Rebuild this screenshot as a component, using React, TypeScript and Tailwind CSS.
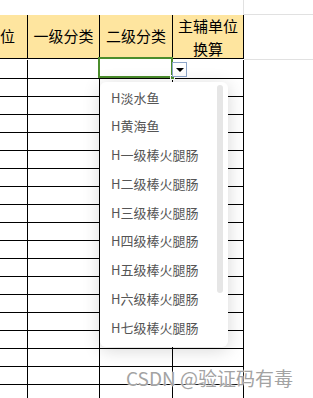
import React from 'react';

const items = [
  'H淡水鱼',
  'H黄海鱼',
  'H一级棒火腿肠',
  'H二级棒火腿肠',
  'H三级棒火腿肠',
  'H四级棒火腿肠',
  'H五级棒火腿肠',
  'H六级棒火腿肠',
  'H七级棒火腿肠',
];

const bodyRows = Array.from({ length: 19 }, (_, i) => i);

function Row({ first }: { first?: boolean }) {
  return (
    <div className="flex">
      <div className={`flex w-[244px] border-b border-black ${first ? 'h-[19px]' : 'h-[18px]'}`}>
        <div className="w-[28px] border-r border-black" />
        <div className="w-[72px] border-r border-black" />
        <div className="w-[73px] border-r border-black" />
        <div className="w-[71px] border-r border-black" />
      </div>
      <div className="flex-1" />
    </div>
  );
}

export default function App() {
  return (
    <div
      className="relative h-[398px] w-[313px] overflow-hidden bg-white"
      style={{ fontFamily: '"Noto Sans CJK SC", "Liberation Sans", sans-serif' }}
    >
      {/* top strip */}
      <div className="flex h-[15px]">
        <div className="w-[243px]" />
        <div className="flex-1 border-b border-l border-[#e1e1e1]" />
      </div>

      {/* header */}
      <div className="flex">
        <div className="flex h-[44px] w-[244px] border-b border-black bg-[#fee59f] text-[15px] text-black">
          <div className="w-[28px] overflow-hidden border-r border-black">
            <div className="ml-[-27px] flex h-full w-[54px] items-center justify-center">单位</div>
          </div>
          <div className="flex w-[72px] items-center justify-center border-r border-black">一级分类</div>
          <div className="flex w-[73px] items-center justify-center border-r border-black">二级分类</div>
          <div className="flex w-[71px] flex-col items-center justify-center border-r border-black leading-[23px]">
            <span>主辅单位</span>
            <span>换算</span>
          </div>
        </div>
        <div className="h-[45px] flex-1 border-b border-[#e1e1e1]" />
      </div>

      {/* body rows */}
      {bodyRows.map((i) => (
        <Row key={i} first={i === 0} />
      ))}

      {/* selected cell */}
      <div className="absolute left-[98px] top-[57px] h-[21px] w-[75px] border-2 border-[#4b8d2c]" />
      <div className="absolute left-[170px] top-[75px] h-[5px] w-[5px] border border-white bg-[#4b8d2c]" />

      {/* dropdown arrow button */}
      <div className="absolute left-[172px] top-[62px] flex h-[15px] w-[15px] items-center justify-center border border-[#8ea6c9] bg-white">
        <div className="h-0 w-0 border-l-[4px] border-r-[4px] border-t-[4px] border-l-transparent border-r-transparent border-t-black" />
      </div>

      {/* dropdown list */}
      <div className="absolute left-[100px] top-[82px] h-[265px] w-[128px] rounded-[6px] bg-white pt-[1px] shadow-[0_3px_18px_rgba(0,0,0,0.16)]">
        {items.map((t) => (
          <div key={t} className="flex h-[28.75px] items-center pl-[11px] text-[13px] text-[#555555]">
            {t}
          </div>
        ))}
        <div className="absolute right-[5px] top-[3px] h-[208px] w-[6px] rounded-full bg-[#e6e6e6]" />
      </div>

      {/* watermark */}
      <div
        className="absolute left-[126px] top-[366px] text-[19px] leading-[24px] text-[#a3a3a3]"
        style={{ textShadow: '0 0 2px #fff, 0 0 2px #fff' }}
      >
        CSDN @验证码有毒
      </div>
    </div>
  );
}
